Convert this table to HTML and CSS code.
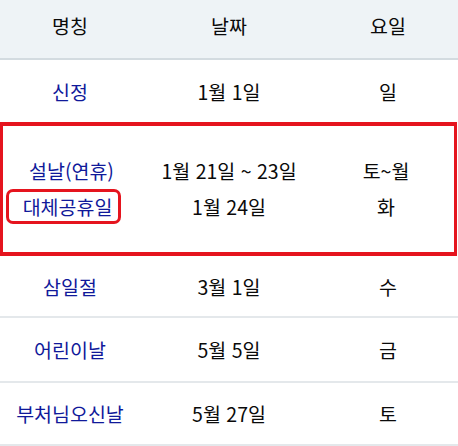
FILE: index.html
```html
<!DOCTYPE html>
<html lang="ko">
<head>
<meta charset="utf-8">
<link rel="stylesheet" href="styles.css">
</head>
<body>
<div class="table">
  <div class="row head">
    <div class="cell">명칭</div>
    <div class="cell">날짜</div>
    <div class="cell">요일</div>
  </div>
  <div class="row r1">
    <div class="cell name">신정</div>
    <div class="cell">1월 1일</div>
    <div class="cell">일</div>
  </div>
  <div class="row marked">
    <div class="cell name stack">
      <div class="line">설날(연휴)</div>
      <div class="line"><span class="tag">대체공휴일</span></div>
    </div>
    <div class="cell stack">
      <div class="line">1월 21일 ~ 23일</div>
      <div class="line">1월 24일</div>
    </div>
    <div class="cell stack">
      <div class="line">토~월</div>
      <div class="line">화</div>
    </div>
  </div>
  <div class="row r3">
    <div class="cell name">삼일절</div>
    <div class="cell">3월 1일</div>
    <div class="cell">수</div>
  </div>
  <div class="row r4">
    <div class="cell name">어린이날</div>
    <div class="cell">5월 5일</div>
    <div class="cell">금</div>
  </div>
  <div class="row r5">
    <div class="cell name">부처님오신날</div>
    <div class="cell">5월 27일</div>
    <div class="cell">토</div>
  </div>
</div>
</body>
</html>
```
FILE: styles.css
```css
* { box-sizing: border-box; }
html, body { margin: 0; padding: 0; background: #fff; }
body {
  font-family: "Noto Sans CJK KR", "Noto Sans", sans-serif;
  font-size: 19.5px;
  color: #0a0a0a;
  width: 458px;
  height: 446px;
  overflow: hidden;
}
.table { display: flex; flex-direction: column; }
.row {
  display: grid;
  grid-template-columns: 140px 178px 140px;
  align-items: center;
}
.cell {
  text-align: center;
  display: flex;
  flex-direction: column;
  align-items: center;
  justify-content: center;
  white-space: nowrap;
}
.head {
  height: 60px;
  background: #eef3f6;
  border-bottom: 2px solid #d3dbe0;
  padding-bottom: 8px;
}
.r1 { height: 62px; }
.marked {
  height: 134px;
  width: 457px;
  border: 4px solid #e5141e;
  border-left-width: 3px;
  border-right-width: 3px;
  grid-template-columns: 137px 178px 136px;
}
.r3, .r4, .r5 { border-bottom: 2px solid #e4e8eb; }
.r3 { height: 62px; }
.r4 { height: 65px; }
.r5 { height: 63px; }
.name { color: #10199a; }
.line { height: 35px; line-height: 35px; }
.stack .line:first-child { line-height: 33px; }
.tag {
  display: inline-block;
  height: 35px;
  line-height: 29px;
  border: 3px solid #e5141e;
  border-radius: 7px;
  padding: 0 6px 0 14px;
  margin-right: 16px;
}
```
